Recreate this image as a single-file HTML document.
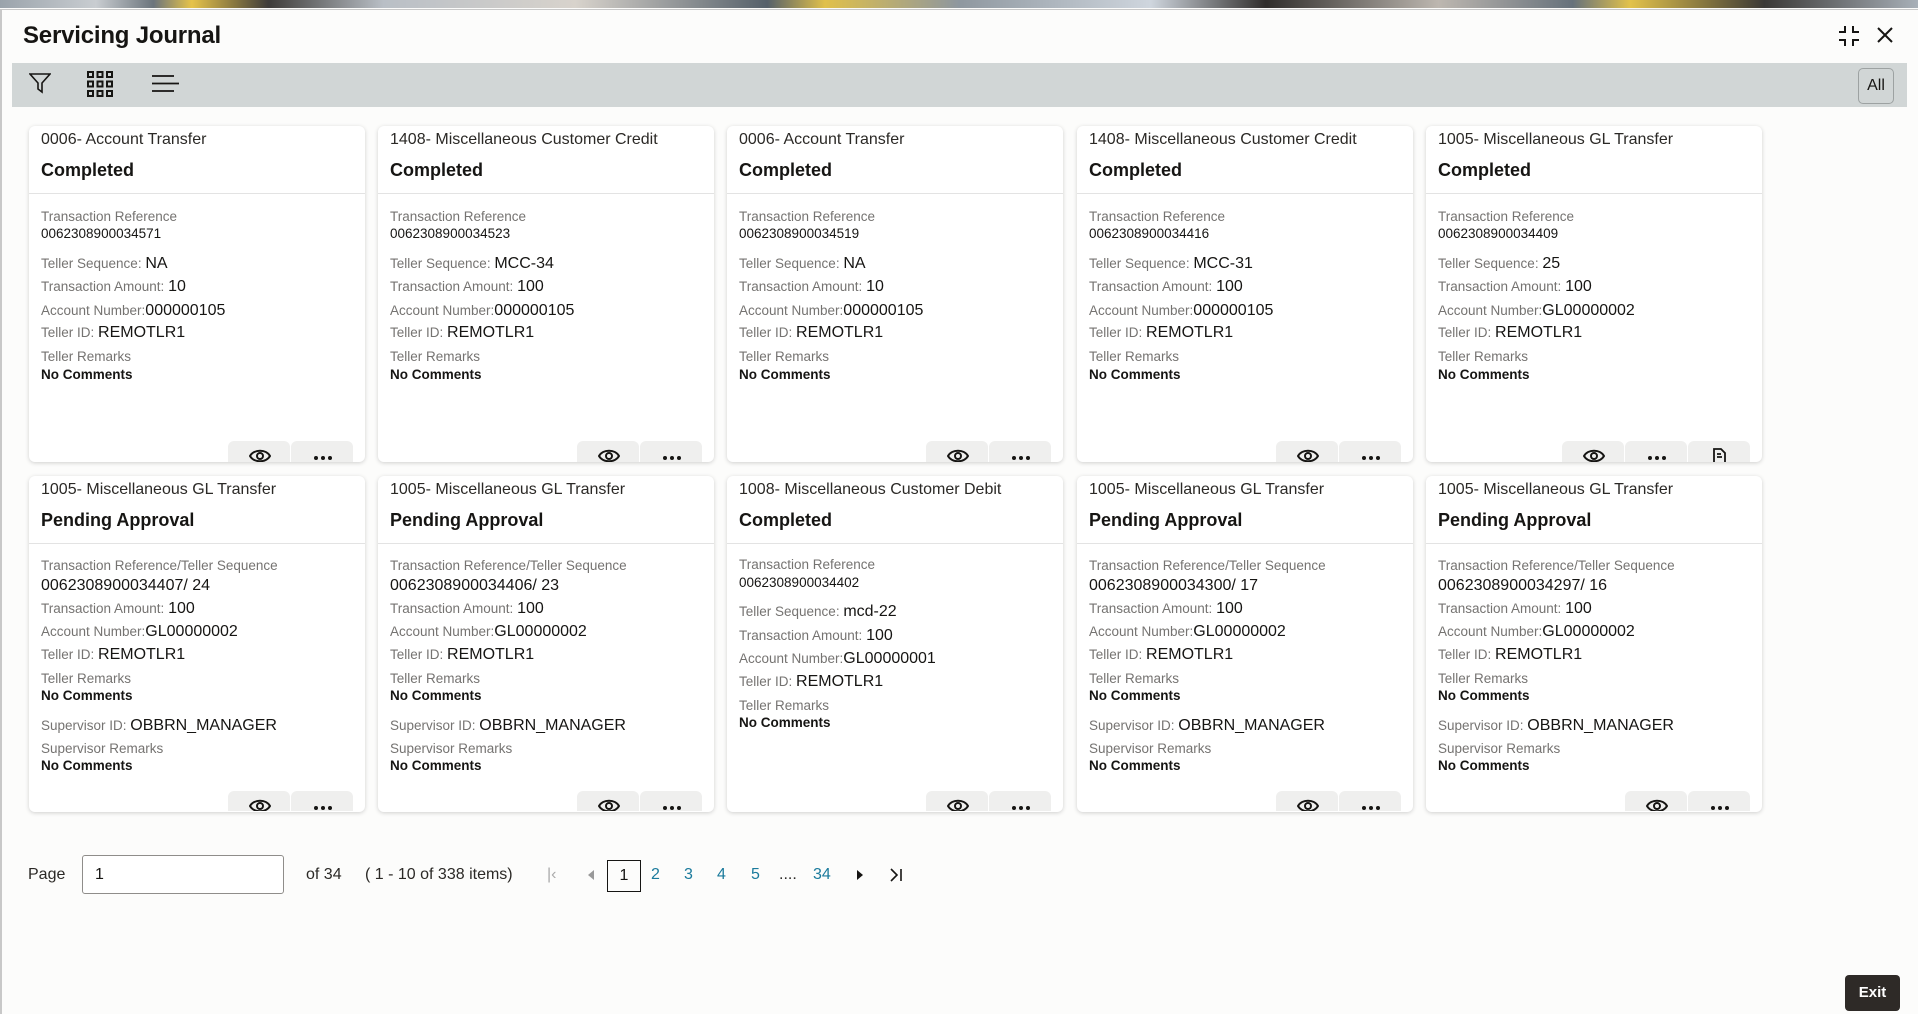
<!DOCTYPE html>
<html><head><meta charset="utf-8">
<style>
*{box-sizing:border-box;margin:0;padding:0}
html,body{width:1918px;height:1014px;overflow:hidden;background:#fbfbfa;font-family:"Liberation Sans",sans-serif;color:#161513}
.strip{position:absolute;left:0;top:0;width:1918px;height:8px;background:linear-gradient(90deg,#9aa3ab 0,#c9cdd1 5%,#6b747c 8%,#e6c34a 10%,#3d3b39 14%,#b9bfc6 20%,#d8d3cc 30%,#55606a 40%,#e0c04a 43%,#8e979f 50%,#cfd6de 60%,#2f2d2b 66%,#bdb7b0 75%,#66717b 82%,#e2c24b 85%,#3a3836 92%,#a8b0b8 100%)}
.dlg{position:absolute;left:0;top:9px;width:1918px;height:1005px;background:#fcfcfb;border-top:1px solid #c8c8c8;border-left:2px solid #c8c8c8}
.title{position:absolute;left:23px;top:22px;font-size:24px;font-weight:bold;color:#161513;letter-spacing:-.2px}
.tb{position:absolute;left:12px;top:63px;width:1895px;height:44px;background:#d1d6d6}
.all{position:absolute;left:1858px;top:68px;width:36px;height:36px;border:1px solid #9da2a2;border-radius:5px;font-size:16px;line-height:34px;text-align:center;color:#161513}
.card{position:absolute;width:336px;height:336px;background:#fff;border-radius:6px;box-shadow:0 1px 4px rgba(0,0,0,.18);overflow:hidden}
.card div{position:absolute;left:12px;white-space:nowrap;line-height:18px}
.card .t{font-size:16px;color:#2b2926}
.card .s{font-size:18px;font-weight:bold;color:#161513}
.card .hr{left:0;width:336px;height:1px;background:#e3e3e3;top:67px}
.card .l{font-size:13.5px;color:#757371}
.card .v{font-size:13.5px;color:#161513}
.card .lv{font-size:13.5px;color:#757371}
.card .lv b{font-weight:normal;font-size:16px;color:#161513}
.card .big{font-size:16px;color:#161513}
.card .nc{font-size:13.5px;font-weight:bold;color:#161513}
.btn{position:absolute;width:62px;height:24px;background:#efefee;border-radius:6px 6px 0 0;overflow:hidden}
.btn svg{position:absolute;left:21px;top:7px}
.pg{position:absolute;top:866px;font-size:16px;color:#2b2926;line-height:18px}
.pn{color:#1a7a9c}
.exit{position:absolute;left:1845px;top:975px;width:55px;height:36px;background:#2e2a27;border-radius:4px;color:#fff;font-size:15px;font-weight:bold;line-height:36px;text-align:center}
</style></head><body>
<div class="strip"></div>
<div class="dlg"></div>
<div class="title">Servicing Journal</div>
<svg style="position:absolute;left:1838px;top:25px" width="22" height="22" viewBox="0 0 22 22" fill="none" stroke="#161513" stroke-width="2"><path d="M7 1v6H1M15 1v6h6M7 21v-6H1M15 21v-6h6"/></svg>
<svg style="position:absolute;left:1877px;top:27px" width="16" height="16" viewBox="0 0 16 16" stroke="#161513" stroke-width="2"><path d="M1 1l14 14M15 1L1 15"/></svg>
<div class="tb"></div>
<svg style="position:absolute;left:29px;top:72px" width="22" height="22" viewBox="0 0 22 22" fill="none" stroke="#161513" stroke-width="1.6"><path d="M1 2h20l-8 9v9l-4-3v-6z"/></svg>
<svg style="position:absolute;left:87px;top:71px" width="26" height="26" viewBox="0 0 26 26" fill="none" stroke="#161513" stroke-width="2"><rect x="1" y="1" width="5" height="5"/><rect x="10.5" y="1" width="5" height="5"/><rect x="20" y="1" width="5" height="5"/><rect x="1" y="10.5" width="5" height="5"/><rect x="10.5" y="10.5" width="5" height="5"/><rect x="20" y="10.5" width="5" height="5"/><rect x="1" y="20" width="5" height="5"/><rect x="10.5" y="20" width="5" height="5"/><rect x="20" y="20" width="5" height="5"/></svg>
<svg style="position:absolute;left:152px;top:74px" width="27" height="20" viewBox="0 0 27 20" stroke="#161513" stroke-width="1.8"><path d="M0 2h22M0 9.5h27M0 17h22"/></svg>
<div class="all">All</div>

<!-- Row 1 -->
<div class="card" style="left:29px;top:126px">
<div class="t" style="top:5px">0006- Account Transfer</div><div class="s" style="top:35px">Completed</div><div class="hr"></div>
<div class="l" style="top:82px">Transaction Reference</div><div class="v" style="top:99px">0062308900034571</div>
<div class="lv" style="top:129px">Teller Sequence: <b>NA</b></div><div class="lv" style="top:152px">Transaction Amount: <b>10</b></div><div class="lv" style="top:176px">Account Number:<b>000000105</b></div><div class="lv" style="top:198px">Teller ID: <b>REMOTLR1</b></div>
<div class="l" style="top:222px">Teller Remarks</div><div class="nc" style="top:240px">No Comments</div>
</div>
<div class="card" style="left:378px;top:126px">
<div class="t" style="top:5px">1408- Miscellaneous Customer Credit</div><div class="s" style="top:35px">Completed</div><div class="hr"></div>
<div class="l" style="top:82px">Transaction Reference</div><div class="v" style="top:99px">0062308900034523</div>
<div class="lv" style="top:129px">Teller Sequence: <b>MCC-34</b></div><div class="lv" style="top:152px">Transaction Amount: <b>100</b></div><div class="lv" style="top:176px">Account Number:<b>000000105</b></div><div class="lv" style="top:198px">Teller ID: <b>REMOTLR1</b></div>
<div class="l" style="top:222px">Teller Remarks</div><div class="nc" style="top:240px">No Comments</div>
</div>
<div class="card" style="left:727px;top:126px">
<div class="t" style="top:5px">0006- Account Transfer</div><div class="s" style="top:35px">Completed</div><div class="hr"></div>
<div class="l" style="top:82px">Transaction Reference</div><div class="v" style="top:99px">0062308900034519</div>
<div class="lv" style="top:129px">Teller Sequence: <b>NA</b></div><div class="lv" style="top:152px">Transaction Amount: <b>10</b></div><div class="lv" style="top:176px">Account Number:<b>000000105</b></div><div class="lv" style="top:198px">Teller ID: <b>REMOTLR1</b></div>
<div class="l" style="top:222px">Teller Remarks</div><div class="nc" style="top:240px">No Comments</div>
</div>
<div class="card" style="left:1077px;top:126px">
<div class="t" style="top:5px">1408- Miscellaneous Customer Credit</div><div class="s" style="top:35px">Completed</div><div class="hr"></div>
<div class="l" style="top:82px">Transaction Reference</div><div class="v" style="top:99px">0062308900034416</div>
<div class="lv" style="top:129px">Teller Sequence: <b>MCC-31</b></div><div class="lv" style="top:152px">Transaction Amount: <b>100</b></div><div class="lv" style="top:176px">Account Number:<b>000000105</b></div><div class="lv" style="top:198px">Teller ID: <b>REMOTLR1</b></div>
<div class="l" style="top:222px">Teller Remarks</div><div class="nc" style="top:240px">No Comments</div>
</div>
<div class="card" style="left:1426px;top:126px">
<div class="t" style="top:5px">1005- Miscellaneous GL Transfer</div><div class="s" style="top:35px">Completed</div><div class="hr"></div>
<div class="l" style="top:82px">Transaction Reference</div><div class="v" style="top:99px">0062308900034409</div>
<div class="lv" style="top:129px">Teller Sequence: <b>25</b></div><div class="lv" style="top:152px">Transaction Amount: <b>100</b></div><div class="lv" style="top:176px">Account Number:<b>GL00000002</b></div><div class="lv" style="top:198px">Teller ID: <b>REMOTLR1</b></div>
<div class="l" style="top:222px">Teller Remarks</div><div class="nc" style="top:240px">No Comments</div>
</div>

<!-- Row 2 -->
<div class="card" style="left:29px;top:476px">
<div class="t" style="top:5px">1005- Miscellaneous GL Transfer</div><div class="s" style="top:35px">Pending Approval</div><div class="hr"></div>
<div class="l" style="top:81px">Transaction Reference/Teller Sequence</div><div class="big" style="top:101px">0062308900034407/ 24</div>
<div class="lv" style="top:124px">Transaction Amount: <b>100</b></div><div class="lv" style="top:147px">Account Number:<b>GL00000002</b></div><div class="lv" style="top:170px">Teller ID: <b>REMOTLR1</b></div>
<div class="l" style="top:194px">Teller Remarks</div><div class="nc" style="top:211px">No Comments</div>
<div class="lv" style="top:241px">Supervisor ID: <b>OBBRN_MANAGER</b></div><div class="l" style="top:264px">Supervisor Remarks</div><div class="nc" style="top:281px">No Comments</div>
</div>
<div class="card" style="left:378px;top:476px">
<div class="t" style="top:5px">1005- Miscellaneous GL Transfer</div><div class="s" style="top:35px">Pending Approval</div><div class="hr"></div>
<div class="l" style="top:81px">Transaction Reference/Teller Sequence</div><div class="big" style="top:101px">0062308900034406/ 23</div>
<div class="lv" style="top:124px">Transaction Amount: <b>100</b></div><div class="lv" style="top:147px">Account Number:<b>GL00000002</b></div><div class="lv" style="top:170px">Teller ID: <b>REMOTLR1</b></div>
<div class="l" style="top:194px">Teller Remarks</div><div class="nc" style="top:211px">No Comments</div>
<div class="lv" style="top:241px">Supervisor ID: <b>OBBRN_MANAGER</b></div><div class="l" style="top:264px">Supervisor Remarks</div><div class="nc" style="top:281px">No Comments</div>
</div>
<div class="card" style="left:727px;top:476px">
<div class="t" style="top:5px">1008- Miscellaneous Customer Debit</div><div class="s" style="top:35px">Completed</div><div class="hr"></div>
<div class="l" style="top:80px">Transaction Reference</div><div class="v" style="top:98px">0062308900034402</div>
<div class="lv" style="top:127px">Teller Sequence: <b>mcd-22</b></div><div class="lv" style="top:151px">Transaction Amount: <b>100</b></div><div class="lv" style="top:174px">Account Number:<b>GL00000001</b></div><div class="lv" style="top:197px">Teller ID: <b>REMOTLR1</b></div>
<div class="l" style="top:221px">Teller Remarks</div><div class="nc" style="top:238px">No Comments</div>
</div>
<div class="card" style="left:1077px;top:476px">
<div class="t" style="top:5px">1005- Miscellaneous GL Transfer</div><div class="s" style="top:35px">Pending Approval</div><div class="hr"></div>
<div class="l" style="top:81px">Transaction Reference/Teller Sequence</div><div class="big" style="top:101px">0062308900034300/ 17</div>
<div class="lv" style="top:124px">Transaction Amount: <b>100</b></div><div class="lv" style="top:147px">Account Number:<b>GL00000002</b></div><div class="lv" style="top:170px">Teller ID: <b>REMOTLR1</b></div>
<div class="l" style="top:194px">Teller Remarks</div><div class="nc" style="top:211px">No Comments</div>
<div class="lv" style="top:241px">Supervisor ID: <b>OBBRN_MANAGER</b></div><div class="l" style="top:264px">Supervisor Remarks</div><div class="nc" style="top:281px">No Comments</div>
</div>
<div class="card" style="left:1426px;top:476px">
<div class="t" style="top:5px">1005- Miscellaneous GL Transfer</div><div class="s" style="top:35px">Pending Approval</div><div class="hr"></div>
<div class="l" style="top:81px">Transaction Reference/Teller Sequence</div><div class="big" style="top:101px">0062308900034297/ 16</div>
<div class="lv" style="top:124px">Transaction Amount: <b>100</b></div><div class="lv" style="top:147px">Account Number:<b>GL00000002</b></div><div class="lv" style="top:170px">Teller ID: <b>REMOTLR1</b></div>
<div class="l" style="top:194px">Teller Remarks</div><div class="nc" style="top:211px">No Comments</div>
<div class="lv" style="top:241px">Supervisor ID: <b>OBBRN_MANAGER</b></div><div class="l" style="top:264px">Supervisor Remarks</div><div class="nc" style="top:281px">No Comments</div>
</div>

<!-- Buttons -->
<svg width="0" height="0" style="position:absolute"><defs>
<symbol id="eye" viewBox="0 0 22 16"><path d="M1 8C5 1 17 1 21 8C17 15 5 15 1 8Z" fill="none" stroke="#161513" stroke-width="2"/><circle cx="11" cy="8" r="3" fill="none" stroke="#161513" stroke-width="2"/></symbol>
<symbol id="dots" viewBox="0 0 22 16"><circle cx="4" cy="10" r="2" fill="#161513"/><circle cx="11" cy="10" r="2" fill="#161513"/><circle cx="18" cy="10" r="2" fill="#161513"/></symbol>
<symbol id="doc" viewBox="0 0 22 16"><path d="M5 16V1h7l4 4v11M8 6h4M8 9h5" fill="none" stroke="#161513" stroke-width="1.8"/></symbol>
</defs></svg>
<div style="position:absolute;left:0;top:0;width:1918px;height:1014px">
<div class="btn" style="left:228px;top:441px;height:21px"><svg width="22" height="16"><use href="#eye"/></svg></div>
<div class="btn" style="left:291px;top:441px;height:21px"><svg width="22" height="16"><use href="#dots"/></svg></div>
<div class="btn" style="left:577px;top:441px;height:21px"><svg width="22" height="16"><use href="#eye"/></svg></div>
<div class="btn" style="left:640px;top:441px;height:21px"><svg width="22" height="16"><use href="#dots"/></svg></div>
<div class="btn" style="left:926px;top:441px;height:21px"><svg width="22" height="16"><use href="#eye"/></svg></div>
<div class="btn" style="left:989px;top:441px;height:21px"><svg width="22" height="16"><use href="#dots"/></svg></div>
<div class="btn" style="left:1276px;top:441px;height:21px"><svg width="22" height="16"><use href="#eye"/></svg></div>
<div class="btn" style="left:1339px;top:441px;height:21px"><svg width="22" height="16"><use href="#dots"/></svg></div>
<div class="btn" style="left:1562px;top:441px;height:21px"><svg width="22" height="16"><use href="#eye"/></svg></div>
<div class="btn" style="left:1625px;top:441px;height:21px"><svg width="22" height="16"><use href="#dots"/></svg></div>
<div class="btn" style="left:1688px;top:441px;height:21px"><svg width="22" height="16"><use href="#doc"/></svg></div>

<div class="btn" style="left:228px;top:791px;height:20px"><svg width="22" height="16"><use href="#eye"/></svg></div>
<div class="btn" style="left:291px;top:791px;height:20px"><svg width="22" height="16"><use href="#dots"/></svg></div>
<div class="btn" style="left:577px;top:791px;height:20px"><svg width="22" height="16"><use href="#eye"/></svg></div>
<div class="btn" style="left:640px;top:791px;height:20px"><svg width="22" height="16"><use href="#dots"/></svg></div>
<div class="btn" style="left:926px;top:791px;height:20px"><svg width="22" height="16"><use href="#eye"/></svg></div>
<div class="btn" style="left:989px;top:791px;height:20px"><svg width="22" height="16"><use href="#dots"/></svg></div>
<div class="btn" style="left:1276px;top:791px;height:20px"><svg width="22" height="16"><use href="#eye"/></svg></div>
<div class="btn" style="left:1339px;top:791px;height:20px"><svg width="22" height="16"><use href="#dots"/></svg></div>
<div class="btn" style="left:1625px;top:791px;height:20px"><svg width="22" height="16"><use href="#eye"/></svg></div>
<div class="btn" style="left:1688px;top:791px;height:20px"><svg width="22" height="16"><use href="#dots"/></svg></div>
</div>

<!-- Pagination -->
<div class="pg" style="left:28px">Page</div>
<div style="position:absolute;left:82px;top:855px;width:202px;height:39px;border:1px solid #8f8d8a;border-radius:3px;background:#fff;font-size:16px;line-height:37px;padding-left:12px">1</div>
<div class="pg" style="left:306px">of 34</div>
<div class="pg" style="left:365px">( 1 - 10 of 338 items)</div>
<div class="pg" style="left:547px;color:#aaa">|&lsaquo;</div>
<svg style="position:absolute;left:588px;top:870px" width="6" height="10"><path d="M6 0L0 5l6 5z" fill="#999"/></svg>
<div style="position:absolute;left:607px;top:860px;width:34px;height:32px;border:1.5px solid #161513;font-size:16px;line-height:30px;text-align:center">1</div>
<div class="pg pn" style="left:651px">2</div>
<div class="pg pn" style="left:684px">3</div>
<div class="pg pn" style="left:717px">4</div>
<div class="pg pn" style="left:751px">5</div>
<div class="pg" style="left:779px">....</div>
<div class="pg pn" style="left:813px">34</div>
<svg style="position:absolute;left:857px;top:870px" width="6" height="10"><path d="M0 0l6 5-6 5z" fill="#161513"/></svg>
<svg style="position:absolute;left:889px;top:868px" width="14" height="14" fill="none" stroke="#161513" stroke-width="1.6"><path d="M2 1l6 6-6 6M12 1v12"/></svg>

<div class="exit">Exit</div>
</body></html>
